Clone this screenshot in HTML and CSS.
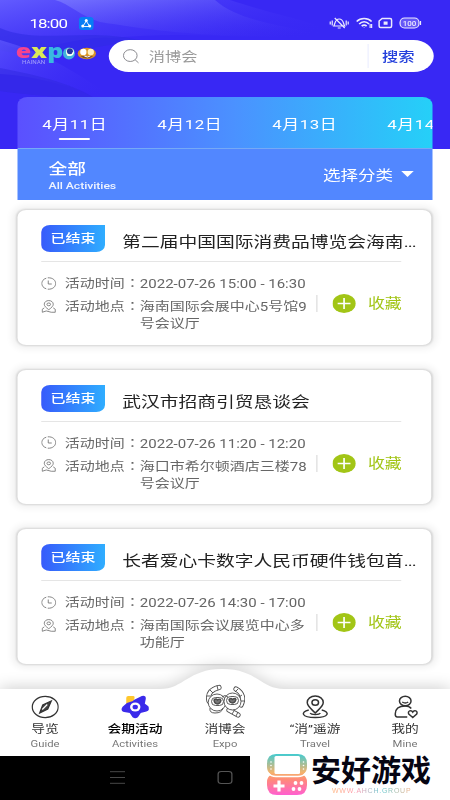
FILE: index.html
```
<!DOCTYPE html>
<html lang="zh-CN">
<head>
<meta charset="utf-8">
<title>会期活动</title>
<link rel="stylesheet" href="styles.css">
</head>
<body>
<div class="stage">
<main class="screen">
  <header class="hero">
    <svg class="waves" viewBox="0 0 450 149" preserveAspectRatio="none">
      <defs>
        <linearGradient id="w1" x1="0" y1="0" x2="1" y2="1"><stop offset="0" stop-color="#7d7cff"/><stop offset="1" stop-color="#3828f4" stop-opacity="0"/></linearGradient>
        <linearGradient id="w2" x1="0" y1="0" x2="1" y2="0.6"><stop offset="0" stop-color="#625bff"/><stop offset="1" stop-color="#3828f4" stop-opacity="0"/></linearGradient>
      </defs>
      <path fill="url(#w2)" d="M0 0H230C290 20 320 20 340 40C260 40 190 30 110 38C70 35 30 60 0 42Z"/>
      <path fill="url(#w1)" opacity=".75" d="M55 0H215C240 22 280 24 320 35C220 40 150 30 100 22C80 16 70 4 55 0Z"/>
      <path fill="#302be4" opacity=".6" d="M0 28C40 45 80 27 140 40C90 47 40 62 0 50Z"/>
      <path fill="url(#w2)" opacity=".7" d="M0 40C50 54 80 75 125 105C80 90 40 76 0 74Z"/>
      <path fill="#3028df" opacity=".5" d="M0 68C40 76 75 83 105 105C65 96 35 96 0 91Z"/>
    </svg>
    <div class="status">
      <span class="clock">18:00</span>
      <svg class="app-dot" viewBox="0 0 15 13" preserveAspectRatio="none"><rect width="15" height="13" rx="3.5" fill="#087df5"/><path d="M7.5 4L4 9.5H11Z" fill="none" stroke="#fff" stroke-width=".9"/><g fill="#fff"><circle cx="7.5" cy="3.6" r="1.5"/><circle cx="4" cy="9" r="1.5"/><circle cx="11" cy="9" r="1.5"/></g></svg>
      <svg class="signals" viewBox="0 0 94 14" preserveAspectRatio="none" fill="none" stroke="#fff" stroke-width="1.2">
        <path d="M1.500 5.500V8.500M3.500 4.500V9.500M17.500 4.500V9.500M19.500 5.500V8.500"/>
        <path d="M5 10H16C14.500 8 15 3 10.500 3C6 3 6.500 8 5 10ZM9 12H12M6 2L16 12"/>
        <path stroke-width="1.7" d="M28 5.500C32 1.500 39 1.500 43 5.500M30.500 8C33.500 5 37.500 5 40.500 8M33 10.200C34.500 8.800 36.500 8.800 38 10.200"/>
        <path d="M35.500 11.500V12M41.500 8V12M43 8V12"/>
        <path stroke-width="1.500" d="M53.500 2.500H61.500Q63 2.500 63 4V10Q63 11.500 61.500 11.500H52Q50.500 11.500 50.500 10V5Z"/>
        <path fill="#fff" stroke="none" d="M55 5.500H59V8.800H55Z"/>
        <rect x="71.500" y="2" width="19" height="10" rx="4.500" fill="#fff" fill-opacity=".25"/><path d="M92 5V9"/>
        <text x="81" y="10" text-anchor="middle" font-size="8" font-weight="500" fill="#fff" stroke="none">100</text>
      </svg>
    </div>
    <div class="search-row">
      <div class="brand">
        <span class="letters"><b class="e">e</b><b class="x">x</b><b class="p">p</b></span>
        <svg class="brand-marks" viewBox="0 0 34 13" preserveAspectRatio="none">
          <circle cx="6.500" cy="6.500" r="6" fill="#40b4dc"/><circle cx="7.500" cy="5" r="4" fill="#efe"/><circle cx="7.500" cy="4.300" r="3" fill="#2836a0"/><path d="M4.500 8Q9 9.500 11 5" stroke="#fff" fill="none"/>
          <ellipse cx="24.500" cy="6.500" rx="9.200" ry="5.800" fill="#d99427"/><path d="M18 9Q24 14 31 9" fill="#7f5530"/><circle cx="21" cy="5" r="3.200" fill="#fff"/><circle cx="28.500" cy="5" r="3.200" fill="#ffefbd"/><path d="M22 9Q25 11 28 9" stroke="#fff" fill="none"/>
        </svg>
        <small>HAINAN</small>
      </div>
      <div class="search">
        <svg class="lens" viewBox="0 0 18 16" preserveAspectRatio="none" fill="none" stroke="#85858b"><ellipse cx="8" cy="7" rx="7" ry="6.300"/><path d="M13 11.500L16.500 14.800"/></svg>
        <span class="hint">消博会</span>
        <span class="go">搜索</span>
      </div>
    </div>
    <nav class="dates"><span class="on">4月11日</span><span>4月12日</span><span>4月13日</span><span>4月14日</span></nav>
  </header>
  <section class="filter">
    <div class="all"><strong>全部</strong><span>All Activities</span></div>
    <div class="pick">选择分类<i></i></div>
  </section>
  <section class="list" id="list"></section>
  <footer class="tabbar">
    <svg class="hump" viewBox="0 0 450 96" preserveAspectRatio="none"><path d="M0 29H160C184 29 188 9 222 9C258 9 260 29 284 29H450V96H0Z" fill="#fff"/></svg>
    <div class="tab">
      <svg viewBox="0 0 28 24" preserveAspectRatio="none" fill="none" stroke="#333" stroke-width="1.300"><ellipse cx="14" cy="12" rx="13" ry="10.700"/><path fill="#444" d="M20 6L16.500 14L8.500 18L11.500 10Z"/><path stroke="#fff" d="M11 14.500L16 9.500"/></svg>
      <b>导览</b><span>Guide</span>
    </div>
    <div class="tab on">
      <svg viewBox="0 0 28 24" preserveAspectRatio="none"><path fill="#ffc72d" d="M5 3Q5 1 7 1H12Q14 1 13 4L10 10H5Z"/><path fill="#3b2bea" stroke="#3b2bea" stroke-width="2" stroke-linejoin="round" d="M13 6L21 2Q24 1 23.500 4L22.500 9L26.500 12Q28 15 25 15.500L19 17L16 21.500Q14 23 12 21.500L9 17L3 16Q0 15 2 12.500L6 9L12 7Z"/><ellipse cx="14" cy="12" rx="5.200" ry="4.500" fill="#fff"/><ellipse cx="14" cy="12" rx="2.700" ry="2.300" fill="#3b2bea"/></svg>
      <b>会期活动</b><span>Activities</span>
    </div>
    <div class="tab mid">
      <svg class="mascot" viewBox="0 0 40 35" preserveAspectRatio="none" fill="none" stroke="#4b4b4b" stroke-width=".9">
        <g stroke-linecap="round"><path stroke-width="5.200" d="M4 17C2 9 7 5 14 3.500M31 5C38 9 39 15 36 21M24 26L33 31"/><path stroke="#fff" stroke-width="3.500" d="M4 17C2 9 7 5 14 3.500M31 5C38 9 39 15 36 21M24 26L33 31"/></g>
        <path d="M12 1.500L13 6M5 6L8 9M1.500 12H5.500M33 5L30 8M37 11L34 13M39 17H35M29 27L27 30M33 28L31 32"/>
        <ellipse cx="12" cy="18.500" rx="8.800" ry="8.500" fill="#fff"/><ellipse cx="27.500" cy="17.500" rx="8.500" ry="8.500" fill="#fff"/>
        <path d="M5 24Q4 29 10 29Q17 29 18 24M17 13Q20 10 23 13"/>
        <rect x="6.500" y="13.500" width="12" height="8" rx="4"/><rect x="21.500" y="12.500" width="12" height="8" rx="4"/>
        <path stroke-width="1.300" fill="#777" d="M9 16Q11 14 12.500 16Q15 14 16 16.500Q15 20 12 20Q9 19 9 16ZM24 15.500Q26 13.500 27.500 15.500Q30 13.500 31 15.500Q30 19 27 19Q24 18 24 15.500Z"/>
      </svg>
      <b>消博会</b><span>Expo</span>
    </div>
    <div class="tab">
      <svg viewBox="0 0 28 24" preserveAspectRatio="none" fill="none" stroke="#333" stroke-width="1.500"><path d="M14 18C9 13 6 11 6 7.500C6 3.800 9.500 1 14 1S22 3.800 22 7.500C22 11 19 13 14 18Z"/><ellipse cx="14" cy="7.500" rx="3.300" ry="2.800"/><path d="M7.500 15C-1 17 0 22.500 14 22.500S29 17 20.500 15M9 18C10 20 18 20 19 18"/></svg>
      <b>“消”遥游</b><span>Travel</span>
    </div>
    <div class="tab">
      <svg viewBox="0 0 28 24" preserveAspectRatio="none" fill="none" stroke="#333" stroke-width="1.500"><ellipse cx="14" cy="6" rx="5.800" ry="4.800"/><path d="M11 7Q14 9 17 7M16 22H6Q4 22 4 19C4 13 8 11 14 11Q18 11 20 13.500"/><path d="M21.500 22.500L17.500 19C16 16 20 14.500 21.500 17C23 14.500 27 16 25.500 19Z"/></svg>
      <b>我的</b><span>Mine</span>
    </div>
  </footer>
  <div class="system">
    <svg class="menu" viewBox="0 0 15 13" preserveAspectRatio="none" stroke="#484848"><path d="M0 .7H15M0 6.500H15M0 12.300H15"/></svg>
    <i class="home"></i>
  </div>
</main>
<aside class="mark">
  <svg viewBox="0 0 40 41"><defs><linearGradient id="g" x2="0" y2="1"><stop stop-color="#44cbd0"/><stop offset=".45" stop-color="#f4b36c"/><stop offset=".62" stop-color="#ff8b78"/><stop offset="1" stop-color="#ff5fd0"/></linearGradient></defs><path fill="url(#g)" d="M9 0H31Q40 0 40 10V13Q40 18 36 20.500Q40 23 40 28V31Q40 41 30 41H10Q0 41 0 31V28Q0 23 4 20.500Q0 18 0 13V10Q0 0 9 0Z"/><rect x="7.500" y="2" width="25.500" height="18" rx="1.500" fill="#fff"/><path d="M1 19Q4 22.500 9 22.500H31Q36 22.500 39 19" fill="none" stroke="#fff" stroke-width="1.500"/><path stroke="#fff" stroke-width="3.200" d="M6.500 32H17.500M12 26.500V37.500"/><g fill="#fff"><circle cx="28.500" cy="29" r="1.900"/><circle cx="34.500" cy="29" r="1.900"/><circle cx="26.500" cy="35" r="1.900"/><circle cx="32.500" cy="35" r="1.900"/><circle cx="4" cy="8" r=".8"/><circle cx="4" cy="11.500" r=".8"/><circle cx="4" cy="15" r=".8"/><circle cx="36.500" cy="8" r=".8"/><circle cx="36.500" cy="11.500" r=".8"/><circle cx="36.500" cy="15" r=".8"/></g></svg>
  <div class="mark-text"><strong>安好游戏</strong><span>WWW.AHCH.GROUP</span></div>
</aside>
</div>
<script src="app.js"></script>
</body>
</html>
```
FILE: app.js
```
const events = [
  ["第二届中国国际消费品博览会海南<i>...</i>", "2022-07-26 15:00 - 16:30", "海南国际会展中心5号馆9<br>号会议厅"],
  ["武汉市招商引贸恳谈会", "2022-07-26 11:20 - 12:20", "海口市希尔顿酒店三楼78<br>号会议厅"],
  ["长者爱心卡数字人民币硬件钱包首<i>...</i>", "2022-07-26 14:30 - 17:00", "海南国际会议展览中心多<br>功能厅"]
];
const clock = '<svg class="ico" viewBox="0 0 15 13" preserveAspectRatio="none" fill="none" stroke="#777" stroke-width=".9"><path d="M5 1.200C-1 3 -1 10 5 11.800M6.500 .800C17 .200 17 12.800 6.500 12.200"/><path d="M7 3.500V7H10.500"/></svg>';
const pin = '<svg class="ico" viewBox="0 0 15 14" preserveAspectRatio="none" fill="none" stroke="#777" stroke-width=".9"><path d="M7.500 10.500C4.500 8 3 6.500 3 4.500C3 2.300 5 .600 7.500 .600S12 2.300 12 4.500C12 6.500 10.500 8 7.500 10.500Z"/><ellipse cx="7.500" cy="4.700" rx="1.800" ry="1.500"/><path d="M3 8.500L1 10V13.200L5 11.800L10 13.200H14V10L12 8.500"/></svg>';
document.getElementById("list").innerHTML = events.map(([title, time, place]) => `
  <article class="card">
    <div class="head"><span class="badge">已结束</span><h2>${title}</h2></div>
    <div class="body">
      <div class="facts">
        <div class="fact">${clock}<span class="key">活动时间<em lang="zh-TW">：</em></span><span class="value">${time}</span></div>
        <div class="fact">${pin}<span class="key">活动地点<em lang="zh-TW">：</em></span><span class="value">${place}</span></div>
      </div>
      <div class="fav"><svg viewBox="0 0 18 19" preserveAspectRatio="none"><ellipse cx="9" cy="9.500" rx="9" ry="9.500" fill="#a2c516"/><path d="M4 9.500H14M9 4V15" stroke="#fff" stroke-width="1.300"/></svg>收藏</div>
    </div>
  </article>`).join("");
```
FILE: styles.css
```
* { box-sizing: border-box; }
body { margin: 0; background: #fff; font-family: Roboto, "Noto Sans CJK SC", sans-serif; }
svg { display: block; flex: none; }
.stage { position: relative; width: 450px; height: 800px; overflow: hidden; }
/* The handset canvas is 360 units wide and stretched to the window. */
.screen { width: 360px; height: 800px; display: flex; flex-direction: column; transform: scaleX(1.25); transform-origin: 0 0; white-space: nowrap; }
.hero { position: relative; height: 149px; flex: none; background: #3828f4; padding-top: 14px; }
.waves { position: absolute; inset: 0; width: 360px; height: 149px; }
.status { position: relative; height: 18px; display: flex; align-items: center; padding-left: 23.5px; color: #fff; }
.clock { width: 39.5px; font-size: 13.5px; letter-spacing: -.7px; line-height: 17px; }
.app-dot { width: 12px; height: 13px; }
.signals { width: 75px; height: 14px; margin-left: auto; margin-right: 22px; opacity: .9; }
.search-row { position: relative; height: 32px; margin-top: 8px; display: flex; }
.brand { width: 86.5px; padding: 4px 0 0 12.5px; display: grid; grid-template-columns: 37px 27px; grid-template-rows: 16px 6px; align-content: start; }
.letters { font: bold 20px/14px "Open Sans", sans-serif; height: 16px; letter-spacing: .2px; }
.letters b { display: inline-block; }
.e { color: #f5438e; } .x { color: #dbe957; } .p { color: #39b9e0; }
.brand-marks { width: 27px; height: 13px; margin-top: 3px; }
.brand small { font-size: 5px; line-height: 5px; padding-left: 5px; color: #a3a0fa; }
.search { width: 260px; height: 32px; background: #fff; border-radius: 17px; display: flex; align-items: center; padding-left: 11px; }
.lens { width: 14px; height: 15px; }
.hint { font-size: 13px; color: #999; margin: -1px 0 0 7.5px; flex: 1; }
.go { width: 53px; height: 24px; border-left: 1.5px solid #edf0ff; padding-left: 11px; font-size: 13px; line-height: 25px; font-weight: 500; color: #2440dc; }
.dates { position: relative; width: 332px; height: 52px; margin: 25px 0 0 14.4px; border-radius: 8px 8px 0 0; background: linear-gradient(90deg, #5b50ff, #4b91ff 52%, #25d0f8); display: flex; padding-left: 19.5px; overflow: hidden; color: #fff; font-size: 13.5px; line-height: 54px; letter-spacing: .4px; box-shadow: inset 0 -1px #76a9f6; }
.dates span { width: 92px; flex: none; }
.dates .on { position: relative; }
.dates .on::after { content: ""; position: absolute; left: 13px; top: 40.5px; width: 25px; height: 2px; background: #fff; border-radius: 1px; }
.filter { width: 332px; height: 51px; flex: none; margin-left: 14.4px; background: #5287ff; color: #fff; display: flex; justify-content: space-between; padding: 10px 15px 0 24.5px; }
.all { display: flex; flex-direction: column; }
.all strong { font-size: 15px; line-height: 20px; font-weight: 500; }
.all span { font-size: 9.8px; line-height: 13px; letter-spacing: -.05px; font-weight: 500; opacity: .9; }
.pick { display: flex; align-items: center; height: 30px; font-size: 14px; gap: 7px; }
.pick i { border: 5px solid transparent; border-top: 6px solid #fff; border-bottom: 0; }
.list { margin: 10px 0 0 14.4px; width: 331px; height: 455px; flex: none; display: flex; flex-direction: column; gap: 25px; }
.card { height: 134.700px; flex: none; border-radius: 7px; background: #fff; box-shadow: 0 0 2px 1px rgba(0,0,0,.13), 0 0 7px 4px rgba(0,0,0,.06); padding: 15px 24px 0 18.5px; }
.head { height: 37px; display: flex; border-bottom: 1px solid #e5e5e5; }
.badge { width: 51px; height: 27px; flex: none; text-align: center; color: #fff; font-size: 12px; line-height: 28px; background: linear-gradient(90deg, #375bfb, #2fadff); border-radius: 7px 0 7px 7px; font-weight: 500; }
h2 { margin: 0 0 0 14px; font-size: 15px; line-height: 34px; font-weight: 400; color: #222; }
h2 i { font-style: normal; letter-spacing: -.7px; }
.body { display: flex; color: #666; font-size: 12px; line-height: 17px; }
.facts { width: 221px; padding-top: 13px; }
.fact { display: flex; height: 23px; }
.ico { width: 12px; height: 13px; margin: 1.5px 7px 0 0; }
.key { width: 60px; height: 17px; margin-top: 1px; }
.key em { font: 12px/1 "Noto Sans CJK TC", sans-serif; }
.value { margin-top: 1px; }
.fav { height: 17px; margin-top: 33px; border-left: 1px solid #ddd; padding-left: 12.3px; display: flex; align-items: center; color: #a2c516; font-size: 13.5px; }
.fav svg { width: 18.5px; height: 19px; margin-right: 9.5px; }
.tabbar { position: relative; margin-top: -5px; height: 95px; flex: none; display: flex; padding-top: 35px; }
.hump { position: absolute; left: 0; top: 0; width: 360px; height: 96px; filter: drop-shadow(0 -3px 7px rgba(0,0,0,.16)); }
.tab { position: relative; width: 72px; display: flex; flex-direction: column; align-items: center; color: #333; }
.tab svg { width: 22.4px; height: 24px; }
.tab b { font-size: 11px; line-height: 18px; font-weight: 400; margin-top: 2px; }
.tab span { font-size: 9px; line-height: 10px; color: #777; }
.tab.on b { font-weight: 500; color: #000; }
.mid { margin-top: -11px; }
.tab .mascot { width: 32px; height: 35px; }
.system { height: 45px; flex: none; background: #000; display: flex; align-items: center; }
.menu { width: 12px; height: 13px; margin-left: 88px; }
.home { width: 12px; height: 13px; border: 1px solid #555; border-radius: 3px; margin-left: 74px; }
.mark { position: absolute; left: 250px; top: 754px; width: 200px; height: 46px; background: #fff; display: flex; padding-left: 17px; }
.mark > svg { width: 40px; height: 41px; }
.mark-text { margin-left: 4px; white-space: nowrap; }
.mark strong { display: block; height: 33px; font: 700 30px/29px "Noto Sans CJK SC", sans-serif; color: #060513; }
.mark span { display: block; margin-left: 21px; font: 7px/8px "Liberation Sans", sans-serif; letter-spacing: .75px; color: transparent; background: linear-gradient(90deg, #ffb57d, #ff9ab0 30%, #5cc7cf 60%, #ffad7d); background-clip: text; width: 82px; }
```
